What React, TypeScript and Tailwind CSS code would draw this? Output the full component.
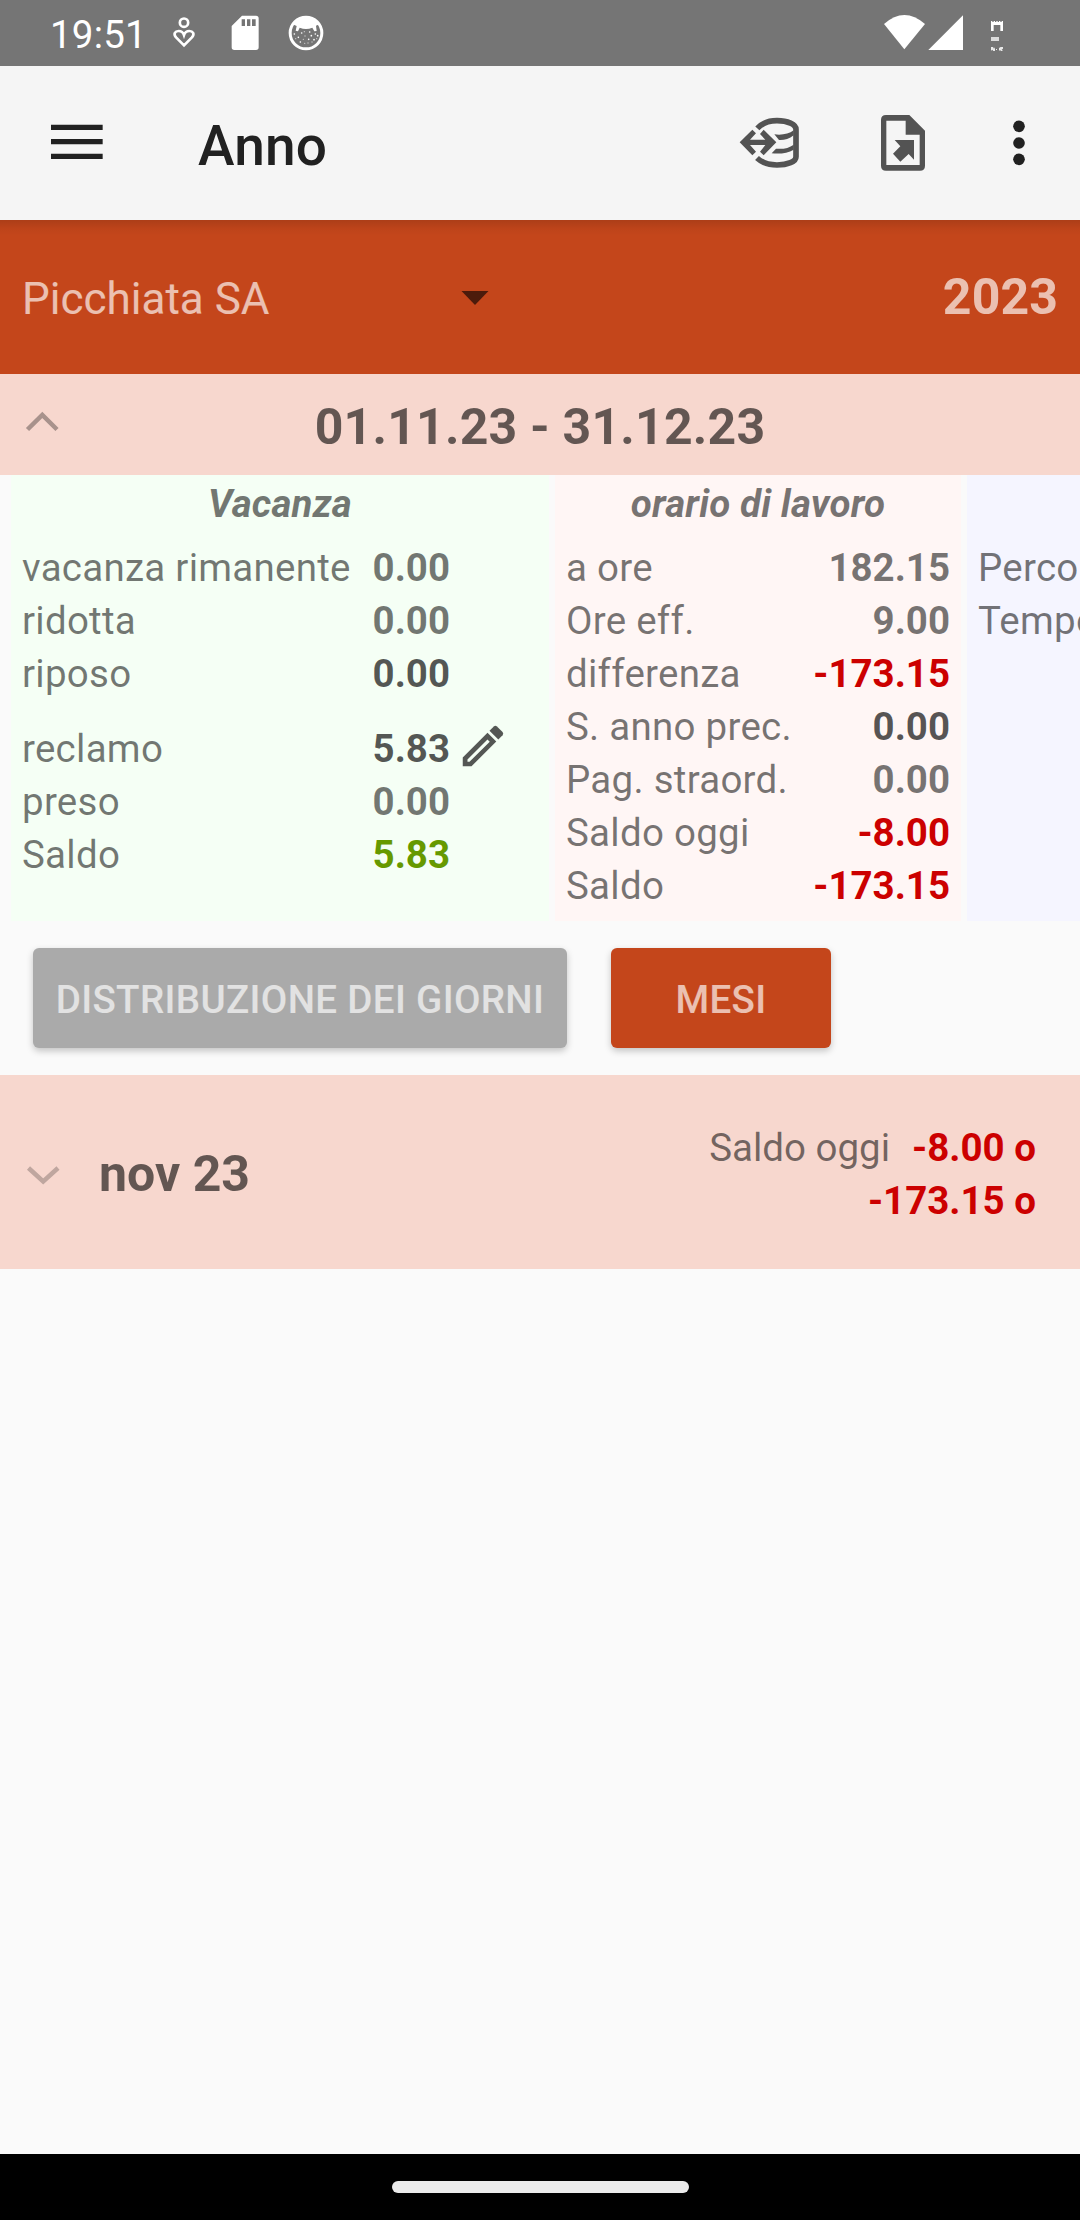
import type { ReactNode } from "react";

type Row = { label: string; value?: string; tone?: string; gap?: boolean; edit?: boolean };

const MUTED = "text-black/[.54]";
const DARK = "text-black/[.66]";
const RED = "text-[#cc0000]";
const GREEN = "text-[#669900]";

const vacation: Row[] = [
  { label: "vacanza rimanente", value: "0.00", tone: MUTED },
  { label: "ridotta", value: "0.00", tone: MUTED },
  { label: "riposo", value: "0.00", tone: DARK },
  { label: "reclamo", value: "5.83", tone: DARK, gap: true, edit: true },
  { label: "preso", value: "0.00", tone: MUTED },
  { label: "Saldo", value: "5.83", tone: GREEN },
];

const worktime: Row[] = [
  { label: "a ore", value: "182.15", tone: MUTED },
  { label: "Ore eff.", value: "9.00", tone: MUTED },
  { label: "differenza", value: "-173.15", tone: RED },
  { label: "S. anno prec.", value: "0.00", tone: DARK },
  { label: "Pag. straord.", value: "0.00", tone: MUTED },
  { label: "Saldo oggi", value: "-8.00", tone: RED },
  { label: "Saldo", value: "-173.15", tone: RED },
];

const travel: Row[] = [{ label: "Percorso" }, { label: "Tempo" }];

function StatusBar() {
  return (
    <header className="flex h-[66px] shrink-0 items-center bg-[#757575] pl-[50px] text-white">
      <span className="w-[118px] pt-1 text-[38.5px] leading-none tracking-[0.2px]">19:51</span>
      <svg className="ml-[2px] h-[36px] w-[28px]" viewBox="508 48 84 108" fill="none" stroke="white" strokeWidth="8">
        <circle cx="550" cy="71" r="12.5" />
        <path d="M550 139 L527 116 C516 104 524 96 534 96 C543 96 548 102 550 108 C552 102 557 96 566 96 C576 96 584 104 573 116 Z" />
      </svg>
      <svg className="ml-[32px] h-[36px] w-[30px]" viewBox="688 46 90 108">
        <path
          fill="white"
          fillRule="evenodd"
          d="M724 48 H766 Q774 48 774 56 V143 Q774 151 766 151 H701 Q693 151 693 143 V79 Z M723 59 V79 H733 V59 Z M739 59 V79 H749 V59 Z M754 59 V79 H765 V59 Z"
        />
      </svg>
      <svg className="ml-[28px] h-[36px] w-[36px]" viewBox="862 46 108 108">
        <circle cx="916" cy="100" r="47.5" fill="none" stroke="white" strokeWidth="9" />
        <path
          fill="white"
          d="M876 74 C890 46 942 46 956 74 L946 78 L948 94 L941 95 L935 84 C922 89 910 89 897 84 L892 95 L885 93 L888 79 Z"
        />
        <path
          fill="none"
          stroke="white"
          strokeWidth="5"
          strokeLinecap="round"
          d="M881 103h.1M893 113h.1M903 100h.1M927 97h.1M932 108h.1M944 103h.1M951 108h.1M899 127h.1M924 119h.1M940 120h.1"
        />
        <path
          fill="none"
          stroke="white"
          strokeOpacity=".6"
          strokeWidth="4"
          strokeLinecap="round"
          d="M885 117h.1M911 96h.1M913 109h.1M908 119h.1M912 131h.1M922 130h.1M934 127h.1M948 117h.1"
        />
      </svg>
      <svg className="ml-auto h-[38px] w-[80px]" viewBox="486 42 240 114" fill="white">
        <path d="M489 72 Q550 18 612 72 L550 148 Z" />
        <path d="M622 150 L726 46 V150 Z" />
      </svg>
      <svg className="mr-[74px] ml-[26px] h-[38px] w-[17px]" viewBox="804 42 51 114" fill="white">
        <path d="M810 66 h36 v27 h-8 v-18 h-20 v18 h-8 Z" />
        <path d="M810 63h4v3h-4zM818 63h4v3h-4zM826 63h4v3h-4zM834 63h4v3h-4zM842 63h4v3h-4z" />
        <path opacity=".75" d="M810 111 h24 v12 h-24 Z" />
        <path opacity=".85" d="M810 141 h6 l3 5 l3 -4 v11 h-5 l-3 -4 l-4 3 Z M834 144 l5 -3 h7 v5 l-4 3 l4 4 h-6 l-3 -3 l-3 3 Z M825 147 h3 v3 h-3 Z" />
      </svg>
    </header>
  );
}

function Toolbar() {
  return (
    <div className="flex h-[154px] shrink-0 items-center bg-[#f5f5f5] pr-[48px] pl-[51px] text-[#212121]">
      <svg className="-mt-[2px] h-[36px] w-[52px]" viewBox="153 370 156 108" fill="currentColor">
        <path d="M153 372h155v16H153zM153 415h155v16H153zM153 459h155v16H153z" />
      </svg>
      <h1 className="ml-[95px] pt-1.5 text-[55px] leading-none font-medium tracking-[0.2px]">Anno</h1>
      <svg className="ml-auto h-[56px] w-[64px] text-[#535353]" viewBox="54 345 192 168" fill="currentColor">
        <path
          fill="none"
          stroke="currentColor"
          strokeWidth="17"
          d="M112 385 C128 368 148 362 171 362 C203 362 228 373 228 388 V470 C228 485 203 495 171 495 C146 495 126 488 111 474"
        />
        <path d="M163 403 C185 406 207 402 221 391 V406 C207 418 190 421 177 420 Z" />
        <path d="M168 446 C190 448 207 444 221 434 V449 C204 460 180 462 155 460 Z" />
        <path d="M59 427 L97 389 L108 400 L90 419 H136 L120 402 L131 389 L169 427 L131 466 L120 455 L136 435 H90 L108 455 L97 466 Z" />
      </svg>
      <svg className="ml-[77px] h-[58px] w-[48px] text-[#535353]" viewBox="477 342 144 174" fill="currentColor">
        <path
          fillRule="evenodd"
          d="M498 345 H568 L615 392 V497 Q615 512 600 512 H498 Q483 512 483 497 V360 Q483 345 498 345 Z M499 362 V495 H599 V404 H557 V362 Z"
        />
        <path d="M524 420 H582 V479 L566 462 L541 485 L519 461 L541 439 Z" />
      </svg>
      <svg className="ml-[79px] h-[58px] w-[26px]" viewBox="858 342 78 174" fill="currentColor">
        <circle cx="897" cy="379" r="17.5" />
        <circle cx="897" cy="429" r="17.5" />
        <circle cx="897" cy="478" r="17.5" />
      </svg>
    </div>
  );
}

function Panel({
  title,
  rows,
  className,
  pad,
}: {
  title?: string;
  rows: Row[];
  className: string;
  pad: string;
}) {
  return (
    <section className={`h-[446px] shrink-0 overflow-hidden pl-[11px] text-[38.5px] leading-[53px] text-black/[.54] ${pad} ${className}`}>
      <h3 className="mt-[2px] h-[53px] text-center font-bold tracking-[0.15px] italic">{title}</h3>
      <dl className="mt-[11px]">
        {rows.map((row) => (
          <div key={row.label} className={`flex h-[53px] justify-between ${row.gap ? "mt-[22px]" : ""}`}>
            <dt className="tracking-[0.26px] whitespace-nowrap">{row.label}</dt>
            <dd className={`relative font-bold ${row.tone ?? ""}`}>
              {row.value}
              {row.edit && (
                <svg className="absolute top-[-3px] left-full ml-[6px] h-[54px] w-[54px]" viewBox="0 0 24 24" fill="currentColor">
                  <path
                    fillRule="evenodd"
                    d="M3 21V17.1L14 6.1L17.9 10L6.9 21ZM5.1 19H6L15 10.1L14 9.1L5.1 18Z"
                  />
                  <path d="M14.9 5.2L16.8 3.3Q17.5 2.7 18.2 3.3L20.7 5.8Q21.3 6.5 20.7 7.2L18.8 9.1Z" />
                </svg>
              )}
            </dd>
          </div>
        ))}
      </dl>
    </section>
  );
}

function RaisedButton({ className, children }: { className: string; children: ReactNode }) {
  return (
    <button
      className={`h-[100px] rounded-[6px] pt-1 text-[38.5px] leading-none font-medium tracking-[0.35px] text-white/[.66] shadow-[0_3px_7px_rgba(0,0,0,0.22)] ${className}`}
    >
      {children}
    </button>
  );
}

export default function App() {
  return (
    <div className="flex h-[2220px] w-[1080px] flex-col overflow-hidden bg-[#fafafa] font-['Roboto',sans-serif]">
      <StatusBar />
      <Toolbar />

      <div className="flex h-[154px] shrink-0 items-center bg-[#c4461b] bg-[linear-gradient(to_bottom,rgba(0,0,0,0.12),rgba(0,0,0,0.03)_9px,transparent_16px)] px-[22px] text-white/[.66]">
        <span className="w-[439px] pt-1 text-[44px] leading-none">Picchiata SA</span>
        <svg className="mt-[2px] h-[14px] w-[28px]" viewBox="0 0 28 14">
          <path d="M0.5 0H27.5L14 14Z" fill="#4d1b0b" />
        </svg>
        <span className="ml-auto text-[50px] leading-none font-bold tracking-[0.1px]">2023</span>
      </div>

      <div className="grid h-[101px] shrink-0 grid-cols-[1fr_auto_1fr] items-center bg-[#f7d7ce]">
        <svg className="-mt-[6px] ml-[24px] h-[24px] w-[36px]" viewBox="0 0 36 24" fill="none" stroke="#a8928c" strokeWidth="4.5">
          <path d="M3.5 19.5 L18.3 5 L33 19.5" />
        </svg>
        <h2 className="pt-1 text-[50px] leading-none font-bold tracking-[0.2px] text-black/60">01.11.23 - 31.12.23</h2>
      </div>

      <div className="flex h-[446px] shrink-0 gap-[6px] overflow-hidden pl-[11px]">
        <Panel title="Vacanza" rows={vacation} className="w-[538px] bg-[#f5fff5]" pad="pr-[99px] [&>h3]:-mr-[99px] [&>h3]:-ml-[11px]" />
        <Panel title="orario di lavoro" rows={worktime} className="w-[406px] bg-[#fff6f5]" pad="pr-[11px]" />
        <Panel rows={travel} className="w-[400px] bg-[#f5f5ff]" pad="pr-[11px]" />
      </div>

      <div className="flex h-[154px] shrink-0 gap-[44px] pt-[27px] pl-[33px]">
        <RaisedButton className="w-[534px] bg-[#aaaaaa]">DISTRIBUZIONE DEI GIORNI</RaisedButton>
        <RaisedButton className="w-[220px] bg-[#c4461b]">MESI</RaisedButton>
      </div>

      <div className="flex h-[194px] shrink-0 items-center bg-[#f7d7ce] pr-[44px] pl-[24px]">
        <svg className="mt-[5px] h-[24px] w-[38px]" viewBox="0 0 38 24" fill="none" stroke="#bfa69f" strokeWidth="4.5">
          <path d="M4.5 5 L19.2 18.5 L34 5" />
        </svg>
        <h2 className="ml-[37px] pt-1 text-[50px] leading-none font-bold text-black/60">nov 23</h2>
        <div className="ml-auto pt-1 text-right text-[38.5px] leading-[53px] font-bold text-[#cc0000]">
          <p>
            <span className="mr-[22px] font-normal text-black/[.54]">Saldo oggi</span>-8.00 o
          </p>
          <p>-173.15 o</p>
        </div>
      </div>

      <main className="flex-1" />

      <footer className="flex h-[66px] shrink-0 justify-center bg-black pt-[27px]">
        <div className="h-[12px] w-[297px] rounded-full bg-[#ebebeb]" />
      </footer>
    </div>
  );
}
